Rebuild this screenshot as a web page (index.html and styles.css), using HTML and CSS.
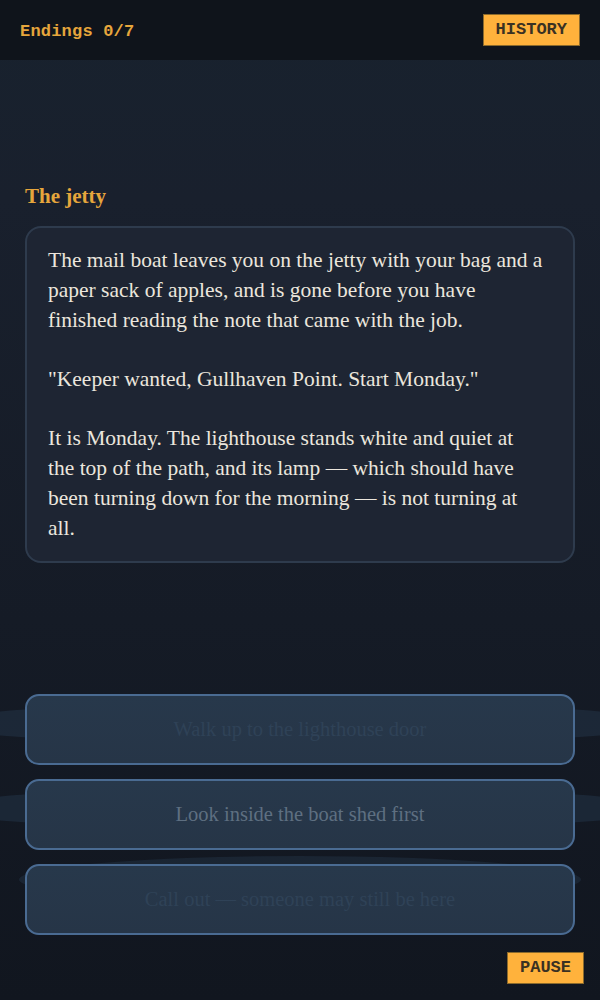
FILE: index.html
```html
<!DOCTYPE html>
<html lang="en">
<head>
<meta charset="utf-8">
<title>The jetty</title>
<link rel="stylesheet" href="styles.css">
</head>
<body>
<div class="app">
  <header class="topbar">
    <span class="endings">Endings 0/7</span>
    <button class="tag-btn">HISTORY</button>
  </header>
  <main class="stage">
    <section class="scene">
      <h1 class="scene-title">The jetty</h1>
      <div class="story">
        <p>The mail boat leaves you on the jetty with your bag and a paper sack of apples, and is gone before you have finished reading the note that came with the job.</p>
        <p>"Keeper wanted, Gullhaven Point. Start Monday."</p>
        <p>It is Monday. The lighthouse stands white and quiet at the top of the path, and its lamp — which should have been turning down for the morning — is not turning at all.</p>
      </div>
    </section>
    <section class="choices">
      <button class="choice choice-faint">Walk up to the lighthouse door</button>
      <button class="choice choice-mid">Look inside the boat shed first</button>
      <button class="choice choice-faint choice-last">Call out — someone may still be here</button>
    </section>
  </main>
  <footer class="footbar">
    <button class="tag-btn">PAUSE</button>
  </footer>
</div>
</body>
</html>
```

FILE: styles.css
```css
* { box-sizing: border-box; }

html, body {
  margin: 0;
  padding: 0;
  height: 1000px;
  overflow: hidden;
}

body {
  background: #11161f;
  font-family: "Liberation Serif", "Times New Roman", serif;
}

.app {
  height: 1000px;
  display: flex;
  flex-direction: column;
  background: linear-gradient(180deg, #18222e 0%, #19202d 20%, #151b26 62%, #11161f 100%);
}

.topbar {
  height: 60px;
  flex: 0 0 60px;
  background: #0f141b;
  display: flex;
  align-items: center;
  justify-content: space-between;
  padding: 0 20px;
}

.endings {
  font-family: "Liberation Mono", "Courier New", monospace;
  font-weight: bold;
  font-size: 17px;
  color: #e6a63c;
  letter-spacing: 0.2px;
  padding-top: 2px;
}

.tag-btn {
  font-family: "Liberation Mono", "Courier New", monospace;
  font-weight: bold;
  font-size: 17px;
  line-height: 20px;
  color: #3a3123;
  background: #ffb23c;
  border: 1px solid #8b6a2c;
  border-radius: 0;
  padding: 5px 12px 5px;
  margin: 0;
  cursor: pointer;
}

.stage {
  flex: 1;
  display: flex;
  flex-direction: column;
  padding: 0 25px;
  overflow: hidden;
}

.scene {
  padding-top: 123px;
}

.scene-title {
  margin: 0 0 17px;
  font-size: 21px;
  line-height: 26px;
  font-weight: bold;
  color: #e6a63c;
}

.story {
  background: #1e2533;
  border: 2px solid #2e3b4d;
  border-radius: 16px;
  padding: 17px 29px 18px 21px;
  color: #ebe6dd;
  font-size: 21.5px;
  line-height: 30px;
}

.story p {
  margin: 0 0 29px;
}

.story p:last-child {
  margin-bottom: 0;
}

.choices {
  margin-top: auto;
  display: flex;
  flex-direction: column;
  gap: 14px;
  position: relative;
  z-index: 0;
}

.choice {
  position: relative;
  height: 71px;
  width: 100%;
  border: 2px solid #4a6b92;
  border-radius: 14px;
  background: linear-gradient(180deg, #27384b 0%, #263547 100%);
  font-family: "Liberation Serif", "Times New Roman", serif;
  font-size: 20.5px;
  cursor: pointer;
  padding: 0 16px;
}

.choice::before {
  content: "";
  position: absolute;
  left: -90px;
  right: -90px;
  top: 6px;
  bottom: 18px;
  border-radius: 50%;
  background: rgba(36, 54, 74, 0.5);
  z-index: -1;
}

.choice-last::before {
  left: -8px;
  right: -8px;
  top: -10px;
  bottom: 30px;
  background: rgba(34, 50, 68, 0.5);
}

.choice-faint { color: #2f4257; }
.choice-mid { color: #5e6f81; }

.footbar {
  display: flex;
  justify-content: flex-end;
  padding: 17px 16px 16px;
}
```
